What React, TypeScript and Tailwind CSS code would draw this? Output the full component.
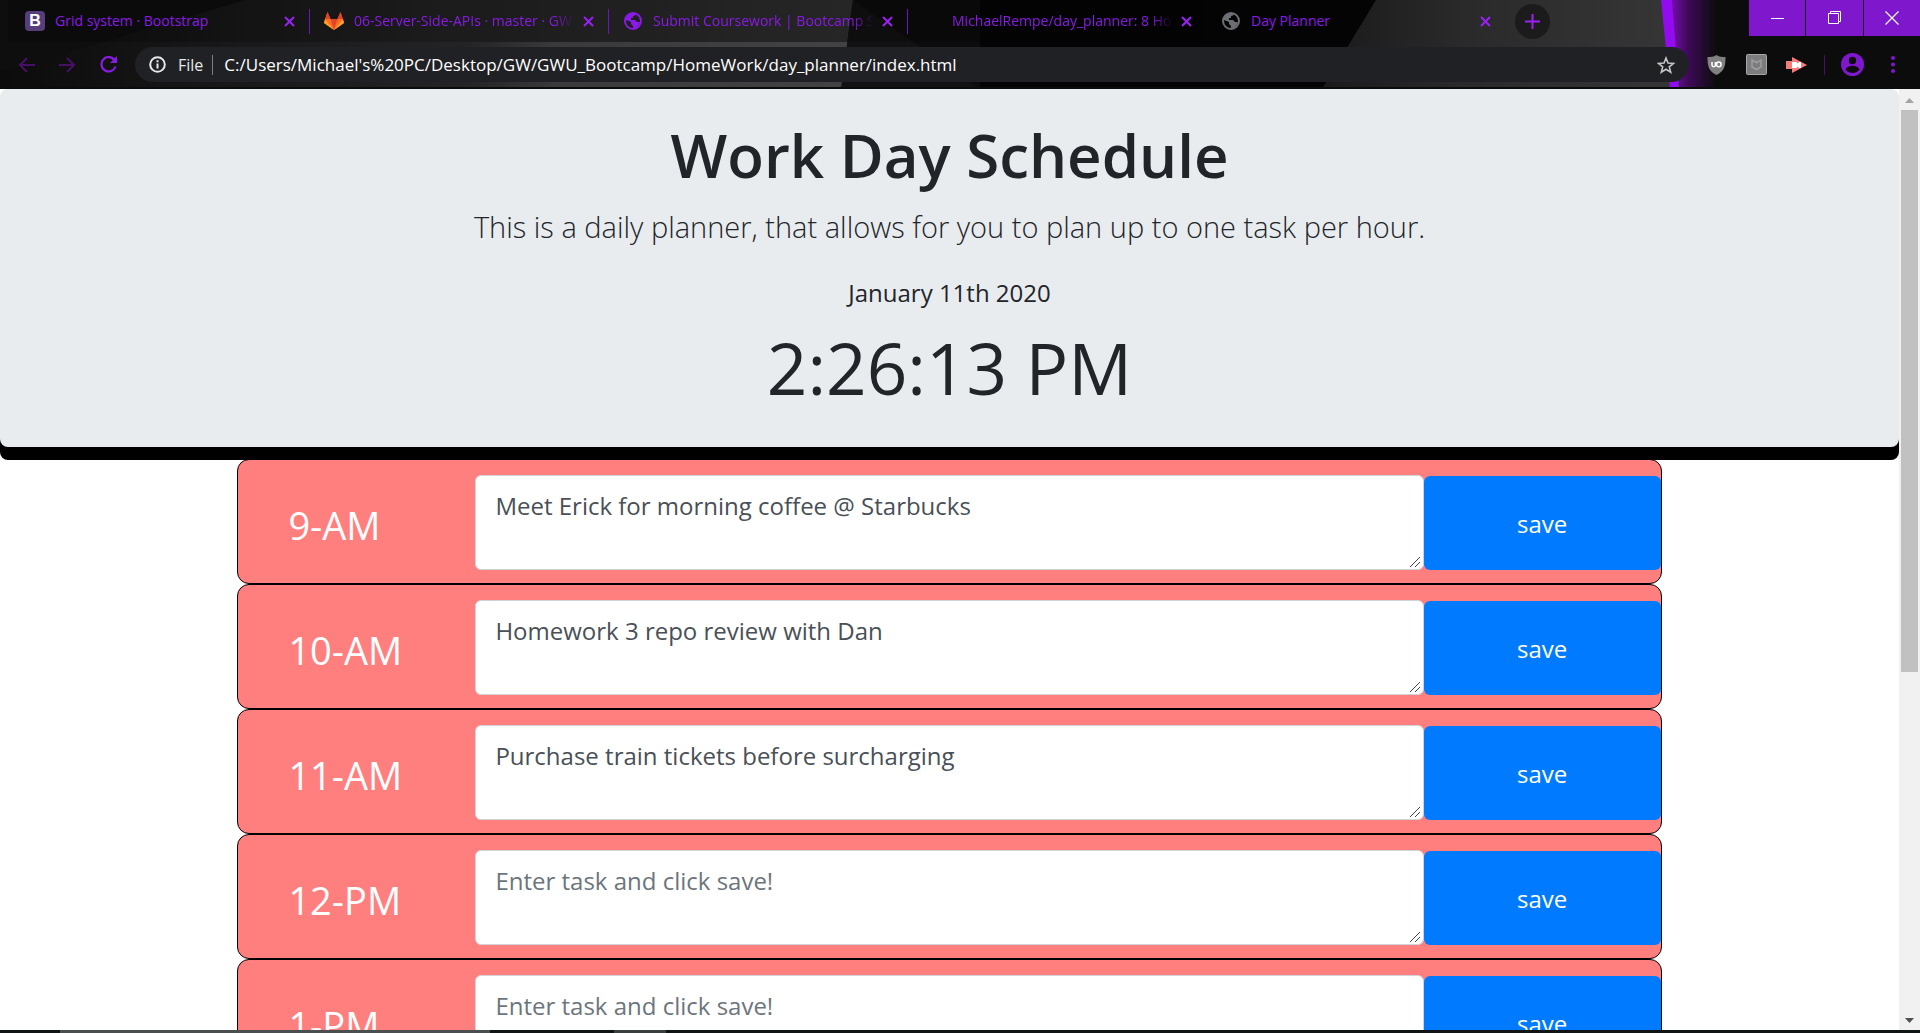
import React from "react";

const PURPLE = "#8a1ae6";

function CloseIcon({ size = 11 }: { size?: number }) {
  return (
    <svg width={size} height={size} viewBox="0 0 11 11" stroke="#9b20f5" strokeWidth="2" aria-hidden="true">
      <path d="M1 1l9 9M10 1l-9 9" />
    </svg>
  );
}

function GlobeIcon({ color }: { color: string }) {
  return (
    <svg width="18" height="18" viewBox="0 0 18 18" aria-hidden="true">
      <circle cx="9" cy="9" r="8" fill="none" stroke={color} strokeWidth="2" />
      <path d="M2 5c1-2 3-4 6-4h4c0 2-1 3-3 3v2H7v2h4l2 2h3c-1 4-4 7-7 7v-3l-2-2v-2L2 8z" fill={color} />
    </svg>
  );
}

function BootstrapIcon() {
  return (
    <span className="flex h-5 w-5 items-center justify-center rounded-sm bg-[#563d7c] font-['Liberation_Sans'] text-base font-bold leading-none text-white">
      B
    </span>
  );
}

function GitlabIcon() {
  return (
    <svg width="20" height="18" viewBox="0 0 20 18" aria-hidden="true">
      <path d="M10 18L0 11 3.500 0l3 7h7l3-7L20 11z" fill="#fc6d26" />
      <path d="M10 18L6.500 7h7z" fill="#e24329" />
      <path d="M10 18L0 11l1-4z" fill="#fca326" />
      <path d="M10 18l10-7-1-4z" fill="#fca326" />
      <path d="M3.500 0L1 7h5.500zM16.500 0L19 7h-5.500z" fill="#e24329" />
    </svg>
  );
}

type TabInfo = { title: string; icon: React.ReactNode; active?: boolean; divider?: boolean; fade: string };

const tabs: TabInfo[] = [
  { title: "Grid system · Bootstrap", icon: <BootstrapIcon />, divider: true, fade: "" },
  { title: "06-Server-Side-APIs · master · GW", icon: <GitlabIcon />, divider: true, fade: "mask-r-from-90%" },
  { title: "Submit Coursework | Bootcamp S", icon: <GlobeIcon color={PURPLE} />, divider: true, fade: "mask-r-from-90%" },
  { title: "MichaelRempe/day_planner: 8 Ho", icon: null, fade: "mask-r-from-90%" },
  { title: "Day Planner", icon: <GlobeIcon color="#6b6e73" />, active: true, fade: "" },
];

function Backdrop() {
  return (
    <svg className="absolute inset-0 h-full w-full" viewBox="0 0 1920 89" preserveAspectRatio="none" aria-hidden="true">
      <defs>
        <linearGradient id="slab" x1="0" x2="1">
          <stop offset="0" stopColor="#0c0c0c" />
          <stop offset="0.500" stopColor="#222222" />
          <stop offset="1" stopColor="#303030" />
        </linearGradient>
        <linearGradient id="band" x1="0" x2="1">
          <stop offset="0" stopColor="#222222" />
          <stop offset="0.250" stopColor="#3a3a3a" />
          <stop offset="1" stopColor="#424242" />
        </linearGradient>
        <linearGradient id="panel" x1="0" x2="1">
          <stop offset="0" stopColor="#1a1a1a" />
          <stop offset="0.400" stopColor="#2a2a2a" />
          <stop offset="1" stopColor="#363636" />
        </linearGradient>
        <linearGradient id="glow" x1="0" x2="1">
          <stop offset="0" stopColor="#7c0bb8" />
          <stop offset="0.400" stopColor="#3e0a58" />
          <stop offset="1" stopColor="#0f0c10" />
        </linearGradient>
      </defs>
      <rect width="1920" height="89" fill="#0d0c0d" />
      <path d="M0 72L245 0H853L841 89H0z" fill="url(#slab)" />
      <path d="M0 72L245 0H0z" fill="#0f0e0f" />
      <path d="M460 42H849L841 89H460z" fill="url(#band)" />
      <path d="M853 0L980 89H841z" fill="#121212" />
      <path d="M980 0H1378L1322 89H980z" fill="#050405" />
      <path d="M1376 0H1670L1680 89H1322z" fill="url(#panel)" />
      <path d="M1670 0H1715V89H1680z" fill="url(#glow)" />
      <path d="M1661 0h11l7 89h-9z" fill="#930cf0" />
      <rect y="87" width="1920" height="2" fill="#0c0c0c" />
    </svg>
  );
}

function TabStrip() {
  return (
    <div className="flex h-[42px]">
      <div className="flex min-w-0 flex-1 pl-2">
        {tabs.map((tab) => (
          <div
            key={tab.title}
            className={`relative flex w-[299px] min-w-0 items-center pl-[17px] pr-3 ${tab.active ? "" : "bg-black/20"}`}
          >
            <span className="flex w-5 shrink-0 justify-center">{tab.icon}</span>
            <a
              href="#"
              className={`ml-[10px] min-w-0 flex-1 overflow-hidden whitespace-nowrap text-sm text-[#8a1ae6] ${tab.fade}`}
            >
              {tab.title}
            </a>
            <button aria-label="Close tab" className="ml-2">
              <CloseIcon />
            </button>
            {tab.divider && <span className="absolute -right-[3px] top-[9px] h-[25px] w-px bg-[#8a1ae6]" />}
          </div>
        ))}
        <button
          aria-label="New tab"
          className="ml-3 mt-1 flex h-[35px] w-[35px] shrink-0 items-center justify-center rounded-full bg-[#1b1b1b]"
        >
          <svg width="15" height="15" viewBox="0 0 15 15" stroke="#9b20f5" strokeWidth="2" aria-hidden="true">
            <path d="M0 7.500h15M7.500 0v15" />
          </svg>
        </button>
      </div>
      <div className="flex h-9 shrink-0 gap-px">
        <button aria-label="Minimize" className="flex w-14 items-center justify-center bg-[#7f17cc]">
          <span className="h-px w-[13px] bg-white" />
        </button>
        <button aria-label="Restore" className="flex w-[57px] items-center justify-center bg-[#7f17cc]">
          <svg width="14" height="14" viewBox="0 0 14 14" fill="none" stroke="white" aria-hidden="true">
            <path d="M0.500 2.500h10v10h-10zM2.500 2.500v-2h10v10h-2" />
          </svg>
        </button>
        <button aria-label="Close" className="flex w-14 items-center justify-center bg-[#7f17cc]">
          <svg width="14" height="14" viewBox="0 0 14 14" stroke="white" strokeWidth="1.200" aria-hidden="true">
            <path d="M0.500 0.500l13 13M13.500 0.500l-13 13" />
          </svg>
        </button>
      </div>
    </div>
  );
}

function Toolbar() {
  return (
    <div className="flex h-[47px] items-start pl-[18px] pt-[5px]">
      <div className="flex h-[35px] items-center gap-6">
        <button aria-label="Back">
          <svg width="17" height="16" viewBox="0 0 17 16" fill="none" stroke="#461069" strokeWidth="2" aria-hidden="true">
            <path d="M17 8H2M9 1L2 8l7 7" />
          </svg>
        </button>
        <button aria-label="Forward">
          <svg width="17" height="16" viewBox="0 0 17 16" fill="none" stroke="#461069" strokeWidth="2" aria-hidden="true">
            <path d="M0 8h15M8 1l7 7-7 7" />
          </svg>
        </button>
        <button aria-label="Reload">
          <svg width="17" height="17" viewBox="0 0 17 17" aria-hidden="true">
            <path d="M14.500 4A7.200 7.200 0 1 0 15.500 10.500" fill="none" stroke={PURPLE} strokeWidth="2.200" />
            <path d="M17 0v7h-7z" fill={PURPLE} />
          </svg>
        </button>
      </div>
      <div className="ml-[18px] flex h-[35px] min-w-0 flex-1 items-center rounded-full bg-[#202124] pl-[14px] pr-[14px] text-base text-white">
        <svg width="17" height="17" viewBox="0 0 17 17" fill="none" stroke="#e8e8e8" strokeWidth="2" aria-hidden="true">
          <circle cx="8.500" cy="8.500" r="7.300" />
          <path d="M8.500 7.500v5M8.500 4.200v2" />
        </svg>
        <span className="ml-3 text-[#e8e8e8]">File</span>
        <span className="ml-[9px] h-5 w-px bg-[#7d7e80]" />
        <input
          aria-label="Address"
          className="ml-[11px] min-w-0 flex-1 bg-transparent text-[17px] outline-none"
          defaultValue="C:/Users/Michael's%20PC/Desktop/GW/GWU_Bootcamp/HomeWork/day_planner/index.html"
        />
        <button aria-label="Bookmark">
          <svg width="18" height="18" viewBox="0 0 18 18" fill="none" stroke="#c4c4c4" strokeWidth="1.600" aria-hidden="true">
            <path d="M9 2l2 5 5.500 0.400-4.200 3.500 1.400 5.300L9 13.300l-4.700 2.900 1.400-5.300L1.500 7.400 7 7z" />
          </svg>
        </button>
      </div>
      <div className="flex h-[35px] shrink-0 items-center pl-[18px] pr-[25px]">
        <button aria-label="uBlock Origin">
          <svg width="19" height="20" viewBox="0 0 19 20" aria-hidden="true">
            <path d="M9.500 0c3 2 6 2 9 2 0 9-1 14-9 18C1.500 16 0.500 11 0.500 2c3 0 6 0 9-2z" fill="#808080" />
            <path d="M5 7v3a1.700 1.700 0 0 0 3.400 0V7" fill="none" stroke="white" strokeWidth="1.500" />
            <circle cx="11.800" cy="9.400" r="2.300" fill="none" stroke="white" strokeWidth="1.500" />
          </svg>
        </button>
        <button aria-label="McAfee WebAdvisor" className="ml-5">
          <svg width="21" height="21" viewBox="0 0 21 21" aria-hidden="true">
            <rect x="0.500" y="0.500" width="20" height="20" rx="1" fill="#7c7c7c" stroke="#a3a6aa" />
            <path d="M6 6l4.500 2.500L15 6v7l-4.500 2.500L6 13z" fill="none" stroke="#9a9da1" strokeWidth="1.600" />
          </svg>
        </button>
        <button aria-label="Screencast" className="ml-[19px]">
          <svg width="21" height="16" viewBox="0 0 21 16" aria-hidden="true">
            <path d="M0 4h6V0l15 8-15 8v-4H0z" fill="#f77b7b" />
            <path d="M6 5h5v1.500L13.500 5H15v6h-1.500L11 9.500V11H6z" fill="white" />
          </svg>
        </button>
        <span className="ml-[17px] h-5 w-px bg-[#461069]" />
        <button aria-label="Profile" className="ml-4">
          <svg width="23" height="23" viewBox="0 0 23 23" aria-hidden="true">
            <circle cx="11.500" cy="11.500" r="11.500" fill="#7f17cc" />
            <circle cx="11.500" cy="7.500" r="3.700" fill="#0f0c10" />
            <path d="M4.500 16.500c2-5 12-5 14 0-3 4.500-11 4.500-14 0z" fill="#0f0c10" />
          </svg>
        </button>
        <button aria-label="Menu" className="ml-[27px]">
          <svg width="4" height="17" viewBox="0 0 4 17" fill="#7f17cc" aria-hidden="true">
            <circle cx="2" cy="2" r="2" />
            <circle cx="2" cy="8.500" r="2" />
            <circle cx="2" cy="15" r="2" />
          </svg>
        </button>
      </div>
    </div>
  );
}

const hours = [
  { label: "9-AM", task: "Meet Erick for morning coffee @ Starbucks" },
  { label: "10-AM", task: "Homework 3 repo review with Dan" },
  { label: "11-AM", task: "Purchase train tickets before surcharging" },
  { label: "12-PM", task: "" },
  { label: "1-PM", task: "" },
];

function HourRow({ label, task }: { label: string; task: string }) {
  return (
    <div className="grid h-[125px] shrink-0 grid-cols-12 rounded-xl border border-black bg-[#ff7f7f] pt-[15px]">
      <label htmlFor={label} className="col-span-2 pl-[50px] pt-6 text-[38px] leading-[52px] text-white">
        {label}
      </label>
      <div className="relative col-span-8 h-[95px]">
        <textarea
          id={label}
          defaultValue={task}
          placeholder="Enter task and click save!"
          className="block h-full w-full resize-none rounded-md border border-[#ced4da] bg-white px-[19px] py-[11px] text-2xl leading-[38px] text-[#495057] placeholder:text-[#6c757d]"
        />
        <svg className="absolute bottom-[3px] right-1 text-[#444]" width="10" height="10" viewBox="0 0 10 10" stroke="currentColor" aria-hidden="true">
          <path d="M0 10L10 0M5 10l5-5" />
        </svg>
      </div>
      <button className="col-span-2 mt-px h-[94px] rounded-md bg-[#007bff] pt-0.5 text-2xl text-white">save</button>
    </div>
  );
}

function Scrollbar() {
  return (
    <div className="flex w-[21px] shrink-0 flex-col items-center bg-[#f1f1f1]" aria-hidden="true">
      <svg width="21" height="21" viewBox="0 0 21 21">
        <path d="M6 14h9l-4.500-5z" fill="#a3a3a3" />
      </svg>
      <div className="h-[562px] w-[17px] bg-[#c1c1c1]" />
      <svg className="mt-auto" width="21" height="21" viewBox="0 0 21 21">
        <path d="M6 9h9l-4.500 5z" fill="#505050" />
      </svg>
    </div>
  );
}

export default function App() {
  return (
    <div className="flex h-screen flex-col overflow-hidden bg-white font-['Open_Sans','Noto_Sans',sans-serif]">
      <header className="relative shrink-0 bg-black">
        <Backdrop />
        <div className="relative">
          <TabStrip />
          <Toolbar />
        </div>
      </header>
      <div className="flex min-h-0 flex-1">
        <main className="flex min-w-0 flex-1 flex-col overflow-hidden text-[#212529]">
          <section className="z-10 mb-3 shrink-0 rounded-lg bg-[#e9ecef] pb-[34px] pt-7 text-center shadow-[0_13px_0_#000]">
            <h1 className="text-[60px] font-semibold leading-[76px]">Work Day Schedule</h1>
            <p className="mt-2.5 text-[29px] font-light leading-[48px]">
              This is a daily planner, that allows for you to plan up to one task per hour.
            </p>
            <p className="mt-[23px] text-2xl leading-[38px]">January 11th 2020</p>
            <p className="mt-2.5 text-[71px] leading-[91px]">2:26:13 PM</p>
          </section>
          <div className="mx-auto flex w-3/4 flex-col">
            {hours.map((hour) => (
              <HourRow key={hour.label} {...hour} />
            ))}
          </div>
        </main>
        <Scrollbar />
      </div>
      <footer className="flex h-[3px] shrink-0 bg-[#101414] pl-[60px]">
        <span className="w-[430px] bg-[#4a4e4e]" />
        <span className="ml-[124px] w-[52px] bg-[#3a3e3e]" />
      </footer>
    </div>
  );
}
